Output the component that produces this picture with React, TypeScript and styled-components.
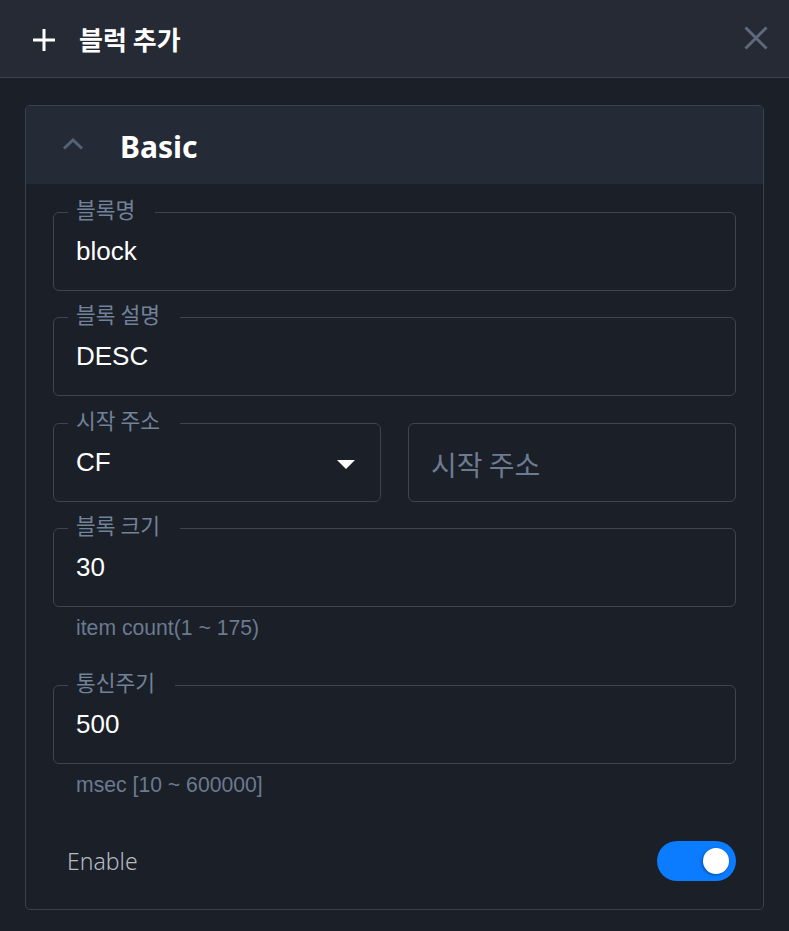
import React from "react";
import styled, { createGlobalStyle } from "styled-components";

const GlobalStyle = createGlobalStyle`
  html, body { margin: 0; padding: 0; background: #1b1f27; }
  #root { min-height: 931px; }
  * { box-sizing: border-box; }
`;

const Page = styled.div`
  width: 789px;
  min-height: 931px;
  background: #1b1f27;
  display: flex;
  flex-direction: column;
`;

const TopBar = styled.header`
  height: 78px;
  background: #252a35;
  border-bottom: 1px solid #3c424e;
  display: flex;
  align-items: center;
  padding: 0 20px 0 32px;
`;

const TitleIcon = styled.svg`
  width: 24px;
  height: 24px;
  flex: none;
  margin-right: 23px;
  margin-top: 2px;
`;

const Title = styled.h1`
  margin: 0;
  flex: 1;
  font-family: "Noto Sans CJK KR", "Noto Sans", sans-serif;
  font-weight: 700;
  font-size: 26px;
  line-height: 32px;
  color: #ffffff;
`;

const CloseButton = styled.button`
  width: 26px;
  height: 26px;
  padding: 0;
  border: 0;
  background: transparent;
  display: flex;
  align-items: center;
  justify-content: center;
  cursor: pointer;
  margin-top: -2px;
`;

const Body = styled.main`
  padding: 27px 25px 20px 25px;
`;

const Card = styled.section`
  border: 1px solid #3b414d;
  border-radius: 5px;
  overflow: hidden;
`;

const CardHeader = styled.div`
  height: 78px;
  background: #252b36;
  display: flex;
  align-items: center;
  padding-left: 36px;
`;

const Chevron = styled.svg`
  width: 22px;
  height: 12px;
  flex: none;
  margin-right: 36px;
  margin-top: -2px;
`;

const CardTitle = styled.h2`
  margin: 4px 0 0 0;
  font-family: "Noto Sans", sans-serif;
  font-weight: 700;
  font-size: 30px;
  line-height: 40px;
  color: #ffffff;
`;

const CardContent = styled.div`
  padding: 16px 27px 28px 27px;
  display: flex;
  flex-direction: column;
`;

const FieldBlock = styled.div<{ $gap?: number }>`
  margin-bottom: ${(p) => p.$gap ?? 14}px;
`;

const Row = styled.div`
  display: flex;
  gap: 27px;
  margin-bottom: 14px;
`;

const Outline = styled.fieldset`
  flex: 1;
  min-width: 0;
  margin: 0;
  padding: 0 14px 12px 14px;
  border: 1px solid #3d4452;
  border-radius: 6px;
`;

const Legend = styled.legend<{ $empty?: boolean }>`
  padding: ${(p) => (p.$empty ? "0 0 6px 0" : "0 20px 6px 8px")};
  width: ${(p) => (p.$empty ? "0" : "auto")};
  overflow: ${(p) => (p.$empty ? "hidden" : "visible")};
  font-family: "Noto Sans CJK KR", "Noto Sans", sans-serif;
  font-size: 21.5px;
  line-height: 18px;
  color: #71829a;
  white-space: nowrap;
`;

const InputLine = styled.div`
  height: 54px;
  display: flex;
  align-items: center;
  padding-left: 8px;
  padding-right: 10px;
`;

const Value = styled.span`
  flex: 1;
  font-family: "Liberation Sans", Arial, sans-serif;
  font-size: 26px;
  color: #ffffff;
`;

const Placeholder = styled.span`
  flex: 1;
  font-family: "Noto Sans CJK KR", "Noto Sans", sans-serif;
  font-size: 28px;
  color: #6c7b91;
  padding-top: 3px;
`;

const Arrow = styled.svg`
  width: 18px;
  height: 9px;
  flex: none;
  margin-right: 1px;
  margin-top: 4px;
`;

const Helper = styled.p`
  margin: 9px 0 0 23px;
  font-family: "Liberation Sans", Arial, sans-serif;
  font-size: 21.2px;
  line-height: 24px;
  color: #6a7a91;
`;

const EnableRow = styled.div`
  display: flex;
  align-items: center;
  justify-content: space-between;
  padding-left: 14px;
  margin-top: 44px;
`;

const EnableLabel = styled.span`
  font-family: "Noto Sans", sans-serif;
  font-weight: 300;
  font-size: 23px;
  color: #b6bbc2;
`;

const Toggle = styled.button<{ $on: boolean }>`
  width: 79px;
  height: 40px;
  border: 0;
  border-radius: 20px;
  padding: 0 7px;
  background: ${(p) => (p.$on ? "#0b7bff" : "#3b414d")};
  display: flex;
  align-items: center;
  justify-content: ${(p) => (p.$on ? "flex-end" : "flex-start")};
  cursor: pointer;
`;

const Knob = styled.span`
  width: 26px;
  height: 26px;
  border-radius: 50%;
  background: #ffffff;
  box-shadow: -1px 1px 3px rgba(0, 0, 0, 0.35);
`;

type FieldProps = { label?: string; value?: string; placeholder?: string; select?: boolean };

function Field({ label, value, placeholder, select }: FieldProps) {
  return (
    <Outline>
      <Legend $empty={!label}>{label ?? "\u00a0"}</Legend>
      <InputLine>
        {value !== undefined ? <Value>{value}</Value> : <Placeholder>{placeholder}</Placeholder>}
        {select && (
          <Arrow viewBox="0 0 18 9">
            <polygon points="0,0 18,0 9,9" fill="#ffffff" />
          </Arrow>
        )}
      </InputLine>
    </Outline>
  );
}

export default function App() {
  return (
    <>
      <GlobalStyle />
      <Page>
        <TopBar>
          <TitleIcon viewBox="0 0 24 24">
            <path d="M12 1v22M1 12h22" stroke="#ffffff" strokeWidth="3" fill="none" />
          </TitleIcon>
          <Title>블럭 추가</Title>
          <CloseButton aria-label="close">
            <svg width="24" height="24" viewBox="0 0 24 24">
              <path d="M1.5 1.5l21 21M22.5 1.5l-21 21" stroke="#5e6a7c" strokeWidth="3" fill="none" />
            </svg>
          </CloseButton>
        </TopBar>
        <Body>
          <Card>
            <CardHeader>
              <Chevron viewBox="0 0 22 12">
                <path d="M2 10.5l9-8.5 9 8.5" stroke="#566172" strokeWidth="3" fill="none" />
              </Chevron>
              <CardTitle>Basic</CardTitle>
            </CardHeader>
            <CardContent>
              <FieldBlock>
                <Field label="블록명" value="block" />
              </FieldBlock>
              <FieldBlock $gap={15}>
                <Field label="블록 설명" value="DESC" />
              </FieldBlock>
              <Row>
                <Field label="시작 주소" value="CF" select />
                <Field placeholder="시작 주소" />
              </Row>
              <FieldBlock $gap={33}>
                <Field label="블록 크기" value="30" />
                <Helper>item count(1 ~ 175)</Helper>
              </FieldBlock>
              <FieldBlock $gap={0}>
                <Field label="통신주기" value="500" />
                <Helper>msec [10 ~ 600000]</Helper>
              </FieldBlock>
              <EnableRow>
                <EnableLabel>Enable</EnableLabel>
                <Toggle $on aria-label="enable">
                  <Knob />
                </Toggle>
              </EnableRow>
            </CardContent>
          </Card>
        </Body>
      </Page>
    </>
  );
}
